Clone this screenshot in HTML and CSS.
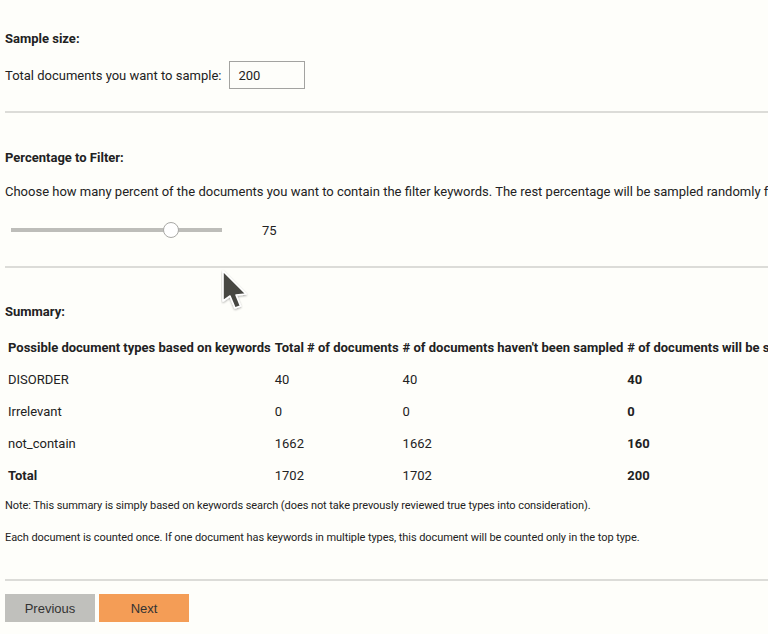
FILE: index.html
```html
<!DOCTYPE html>
<html>
<head>
<meta charset="utf-8">
<link rel="stylesheet" href="styles.css">
</head>
<body>
<div class="page">
  <h3 class="heading first">Sample size:</h3>
  <div class="sample-row">
    <span>Total documents you want to sample:</span>
    <input class="num-input" type="text" value="200">
  </div>
  <div class="rule r1"></div>

  <h3 class="heading h2">Percentage to Filter:</h3>
  <p class="desc">Choose how many percent of the documents you want to contain the filter keywords. The rest percentage will be sampled randomly from the documents that do not contain any of the filter keywords.</p>
  <div class="slider-row">
    <input class="slider" type="range" min="5" max="95" value="75">
    <span class="slider-val">75</span>
  </div>
  <div class="rule r2"></div>

  <h3 class="heading h3">Summary:</h3>
  <table class="summary">
    <thead>
      <tr>
        <th>Possible document types based on keywords</th>
        <th>Total # of documents</th>
        <th># of documents haven't been sampled</th>
        <th># of documents will be sampled</th>
      </tr>
    </thead>
    <tbody>
      <tr><td>DISORDER</td><td>40</td><td>40</td><td class="b">40</td></tr>
      <tr><td>Irrelevant</td><td>0</td><td>0</td><td class="b">0</td></tr>
      <tr><td>not_contain</td><td>1662</td><td>1662</td><td class="b">160</td></tr>
      <tr><td class="b">Total</td><td>1702</td><td>1702</td><td class="b">200</td></tr>
    </tbody>
  </table>
  <p class="note n1">Note: This summary is simply based on keywords search (does not take prevously reviewed true types into consideration).</p>
  <p class="note n2">Each document is counted once. If one document has keywords in multiple types, this document will be counted only in the top type.</p>
  <div class="rule r3"></div>

  <div class="buttons">
    <button class="btn prev">Previous</button>
    <button class="btn next">Next</button>
  </div>
</div>
<svg class="cursor" width="32" height="46" viewBox="0 0 32 46">
  <defs>
    <filter id="sh" x="-30%" y="-30%" width="160%" height="160%">
      <feGaussianBlur in="SourceAlpha" stdDeviation="1"/>
      <feOffset dx="0" dy="1"/>
      <feComponentTransfer><feFuncA type="linear" slope="0.35"/></feComponentTransfer>
      <feMerge><feMergeNode/><feMergeNode in="SourceGraphic"/></feMerge>
    </filter>
  </defs>
  <path filter="url(#sh)" d="M2 2 L2 32 L9 27 L14 39 L19.5 37 L15 26 L25 25 Z" fill="#464643" stroke="#ffffff" stroke-width="1.6" stroke-linejoin="round"/>
</svg>
</body>
</html>
```

FILE: styles.css
```css
html, body {
  margin: 0;
  padding: 0;
  background: #fefefa;
  overflow: hidden;
}
body {
  font-family: Roboto, "Liberation Sans", sans-serif;
  color: #222;
  position: relative;
  width: 768px;
  height: 634px;
}
.page {
  padding: 0 0 0 5px;
  width: 1100px;
}
.heading {
  font-size: 13px;
  font-weight: bold;
  line-height: 16px;
  margin: 0;
}
.first { padding-top: 31px; }
.sample-row {
  display: flex;
  align-items: center;
  gap: 8px;
  margin-top: 14px;
  height: 28px;
  font-size: 13px;
}
.num-input {
  box-sizing: border-box;
  width: 76px;
  height: 28px;
  border: 1px solid #a3a3a0;
  background: #fefefa;
  padding: 0 0 0 8px;
  font-family: Roboto, "Liberation Sans", sans-serif;
  font-size: 13px;
  color: #222;
  margin: 0;
  outline: none;
}
.rule {
  height: 2px;
  background: #dcdcd8;
}
.r1 { margin-top: 22px; }
.h2 { margin-top: 37px; }
.desc {
  margin: 18px 0 0;
  font-size: 13px;
  line-height: 16px;
  white-space: nowrap;
}
.slider-row {
  display: flex;
  align-items: center;
  height: 20px;
  margin-top: 20px;
  font-size: 13px;
}
.slider {
  -webkit-appearance: none;
  appearance: none;
  width: 211px;
  height: 20px;
  margin: 0 40px 0 6px;
  background: transparent;
  padding: 0;
}
.slider::-webkit-slider-runnable-track {
  height: 4px;
  background: #bdbdb9;
  border: none;
}
.slider::-webkit-slider-thumb {
  -webkit-appearance: none;
  width: 16px;
  height: 16px;
  border-radius: 50%;
  background: #ffffff;
  border: 1px solid #a8a8a5;
  box-sizing: border-box;
  margin-top: -6px;
}
.r2 { margin-top: 26px; }
.h3 { margin-top: 36px; }
.summary {
  margin-top: 11px;
  border-collapse: separate;
  border-spacing: 2px 0;
  font-size: 13px;
  white-space: nowrap;
}
.summary th, .summary td {
  height: 32px;
  padding: 0 1px;
  text-align: left;
  vertical-align: middle;
}
.summary th { font-weight: bold; }
.summary td.b { font-weight: bold; }
.note {
  font-size: 11px;
  line-height: 14px;
  margin: 0;
  white-space: nowrap;
  letter-spacing: -0.07px;
}
.n1 { margin-top: 8px; }
.n2 { margin-top: 18px; }
.r3 { margin-top: 34px; }
.buttons {
  display: flex;
  gap: 4px;
  margin-top: 13px;
}
.btn {
  width: 90px;
  height: 28px;
  border: none;
  margin: 0;
  padding: 0;
  font-family: "Liberation Sans", Arial, sans-serif;
  font-size: 13px;
  color: #333;
}
.prev { background: #c0c0bc; }
.next { background: #f49d56; }
.cursor {
  position: absolute;
  left: 221px;
  top: 269px;
}
```
